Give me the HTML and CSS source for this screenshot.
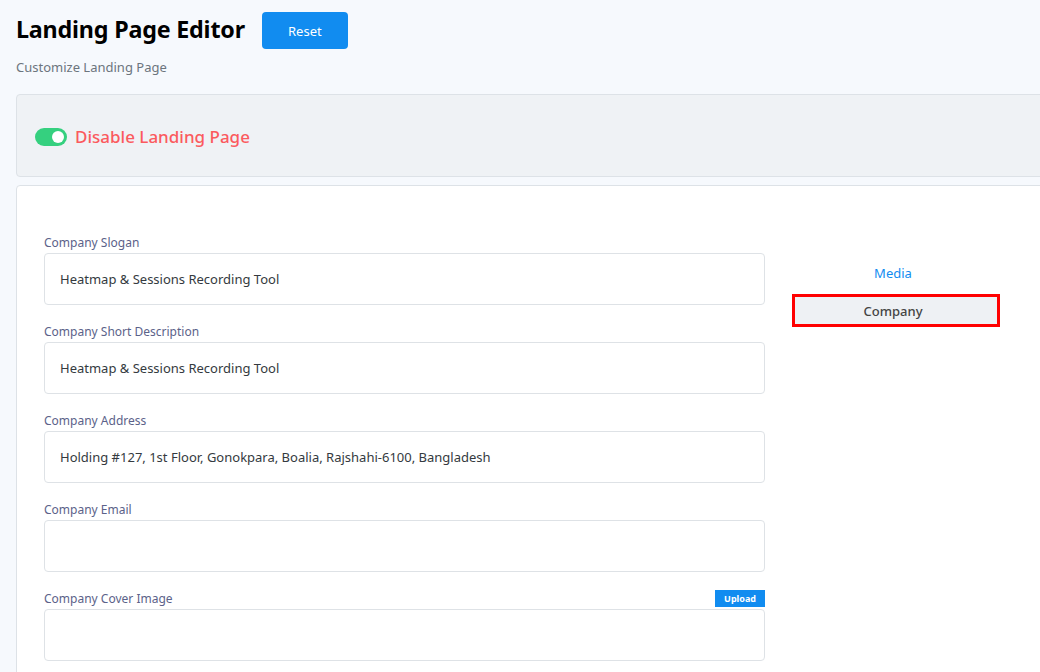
FILE: index.html
```html
<!DOCTYPE html>
<html>
<head>
<meta charset="utf-8">
<link rel="stylesheet" href="styles.css">
</head>
<body>
<div class="page">
  <div class="header">
    <h1 class="title">Landing Page Editor</h1>
    <button class="btn-reset">Reset</button>
  </div>
  <p class="subtitle">Customize Landing Page</p>

  <div class="card toggle-card">
    <span class="switch"><span class="knob"></span></span>
    <span class="toggle-label">Disable Landing Page</span>
  </div>

  <div class="card form-card">
    <div class="form-col">
      <div class="field">
        <label class="label">Company Slogan</label>
        <div class="input">Heatmap &amp; Sessions Recording Tool</div>
      </div>
      <div class="field">
        <label class="label">Company Short Description</label>
        <div class="input">Heatmap &amp; Sessions Recording Tool</div>
      </div>
      <div class="field">
        <label class="label">Company Address</label>
        <div class="input">Holding #127, 1st Floor, Gonokpara, Boalia, Rajshahi-6100, Bangladesh</div>
      </div>
      <div class="field">
        <label class="label">Company Email</label>
        <div class="input"></div>
      </div>
      <div class="field">
        <div class="label-row">
          <label class="label">Company Cover Image</label>
          <span class="upload">Upload</span>
        </div>
        <div class="input"></div>
      </div>
    </div>
    <div class="tabs">
      <div class="tab">Media</div>
      <div class="tab active">Company</div>
    </div>
  </div>
</div>
</body>
</html>
```

FILE: styles.css
```css
* { box-sizing: border-box; }
html, body { margin: 0; padding: 0; }
body {
  background: #f6f9fd;
  font-family: "Noto Sans", "Open Sans", sans-serif;
  width: 1040px;
  height: 672px;
  overflow: hidden;
}
.page {
  padding: 12px 0 0 16px;
  width: 1060px;
}
.header {
  display: flex;
  align-items: center;
  gap: 17px;
}
.title {
  margin: 0 0 4px;
  font-size: 23.3px;
  font-weight: 700;
  color: #000;
  letter-spacing: -0.2px;
}
.btn-reset {
  background: #118cf0;
  color: #fff;
  border: none;
  border-radius: 4px;
  width: 86px;
  height: 37px;
  font-family: inherit;
  font-size: 13px;
}
.subtitle {
  margin: 9px 0 0;
  font-size: 13px;
  color: #6c757d;
}
.card {
  border: 1px solid #dde2e7;
  border-radius: 4px;
}
.toggle-card {
  margin-top: 18px;
  height: 83px;
  background: #eff2f5;
  display: flex;
  align-items: center;
  gap: 8px;
  padding-left: 18px;
  padding-top: 2px;
}
.switch {
  width: 32px;
  height: 18px;
  border-radius: 9px;
  background: #35d07f;
  position: relative;
  display: inline-block;
}
.knob {
  position: absolute;
  right: 3px;
  top: 3px;
  width: 12px;
  height: 12px;
  border-radius: 50%;
  background: #fff;
}
.toggle-label {
  color: #fb5a5e;
  font-size: 17px;
  font-weight: 500;
}
.form-card {
  margin-top: 8px;
  background: #fff;
  padding: 48px 0 0 27px;
  display: flex;
  height: 520px;
}
.form-col {
  width: 721px;
  display: flex;
  flex-direction: column;
  gap: 18px;
}
.label-row {
  display: flex;
  justify-content: space-between;
  align-items: flex-end;
}
.label {
  display: block;
  font-size: 12px;
  color: #5b6289;
  line-height: 18px;
  margin-bottom: 1px;
}
.upload {
  background: #118cf0;
  color: #fff;
  font-size: 9px;
  font-weight: 700;
  padding: 2px 9px;
  height: 17px;
  line-height: 13px;
  margin-bottom: 2px;
}
.input {
  height: 52px;
  border: 1px solid #dee2e6;
  border-radius: 4px;
  padding: 0 15px;
  display: flex;
  align-items: center;
  font-size: 13px;
  color: #343a40;
}
.tabs {
  margin-left: 27px;
  margin-top: 22px;
  width: 208px;
  display: flex;
  flex-direction: column;
  gap: 5px;
}
.tab {
  height: 33px;
  display: flex;
  align-items: center;
  justify-content: center;
  font-size: 13px;
  color: #118cf0;
  padding-right: 6px;
}
.tab.active {
  background: #eef1f4;
  color: #444;
  border: 3px solid #f00;
  font-weight: 500;
}
```
